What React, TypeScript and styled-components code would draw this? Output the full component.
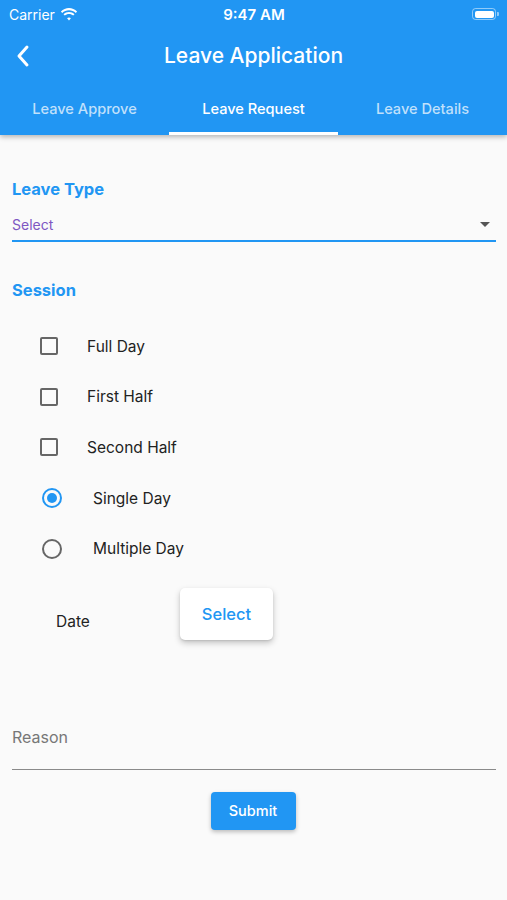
import React from "react";
import styled, { createGlobalStyle } from "styled-components";

const Global = createGlobalStyle`
  html, body { margin: 0; padding: 0; background: #fafafa; }
  body { font-family: Inter, Roboto, "Noto Sans", "Liberation Sans", sans-serif; }
  * { box-sizing: border-box; }
`;

const Page = styled.div`
  width: 507px;
  height: 900px;
  background: #fafafa;
  display: flex;
  flex-direction: column;
  overflow: hidden;
`;

const Header = styled.header`
  background: #2196f3;
  color: #fff;
  box-shadow: 0 2px 5px rgba(0, 0, 0, 0.28);
  position: relative;
  z-index: 1;
`;

const StatusBar = styled.div`
  height: 28px;
  display: grid;
  grid-template-columns: 1fr auto 1fr;
  align-items: center;
  padding: 0 8px 0 9px;
  font-size: 14px;
  font-weight: 600;
`;

const Carrier = styled.div`
  display: flex;
  align-items: center;
  gap: 5px;
  font-weight: 400;
  font-size: 14px;
`;

const Time = styled.div`
  font-size: 15px;
  font-weight: 600;
`;

const Battery = styled.div`
  justify-self: end;
  display: flex;
  align-items: center;
`;

const BatteryBody = styled.div`
  width: 24px;
  height: 12px;
  border-radius: 3.5px;
  border: 1px solid rgba(255, 255, 255, 0.5);
  padding: 1.5px;
  & > div {
    background: #fff;
    width: 100%;
    height: 100%;
    border-radius: 2px;
  }
`;

const BatteryTip = styled.div`
  width: 2px;
  height: 4px;
  margin-left: 1px;
  background: rgba(255, 255, 255, 0.5);
  border-radius: 0 1px 1px 0;
`;

const TitleRow = styled.div`
  height: 55px;
  display: flex;
  align-items: center;
  justify-content: center;
  position: relative;
`;

const Back = styled.div`
  position: absolute;
  left: 15px;
  top: 16px;
  display: flex;
`;

const Title = styled.h1`
  margin: 0;
  font-size: 21px;
  font-weight: 500;
`;

const Tabs = styled.nav`
  display: grid;
  grid-template-columns: repeat(3, 1fr);
  height: 52px;
`;

const Tab = styled.div<{ $active?: boolean }>`
  display: flex;
  align-items: center;
  justify-content: center;
  padding-top: 2px;
  font-size: 14.6px;
  font-weight: 500;
  color: ${(p) => (p.$active ? "#fff" : "rgba(255,255,255,0.72)")};
  border-bottom: 3px solid ${(p) => (p.$active ? "#fff" : "transparent")};
`;

const Body = styled.main`
  padding: 42px 11px 0 12px;
  display: flex;
  flex-direction: column;
`;

const SectionLabel = styled.div`
  color: #2196f3;
  font-size: 16.5px;
  font-weight: 700;
  line-height: 24px;
`;

const Dropdown = styled.div`
  margin-top: 11px;
  height: 30px;
  display: flex;
  align-items: center;
  justify-content: space-between;
  border-bottom: 2px solid #2196f3;
  padding-bottom: 4px;
  padding-right: 6px;
`;

const DropText = styled.span`
  color: #7e57c2;
  font-size: 14px;
`;

const Caret = styled.span`
  width: 0;
  height: 0;
  border-left: 5px solid transparent;
  border-right: 5px solid transparent;
  border-top: 5px solid #555;
`;

const SessionBlock = styled.div`
  margin-top: 36px;
`;

const Options = styled.div`
  margin-top: 19px;
  display: flex;
  flex-direction: column;
`;

const OptionRow = styled.div<{ $radio?: boolean }>`
  height: 50.6px;
  display: flex;
  align-items: center;
  padding-left: ${(p) => (p.$radio ? "30px" : "28px")};
  gap: ${(p) => (p.$radio ? "31px" : "29px")};
  font-size: 15.5px;
  color: #222;
`;

const CheckBox = styled.span`
  width: 18px;
  height: 18px;
  border: 2px solid #666;
  border-radius: 2px;
  display: block;
`;

const Radio = styled.span<{ $on?: boolean }>`
  width: 20px;
  height: 20px;
  border-radius: 50%;
  border: 2px solid ${(p) => (p.$on ? "#2196f3" : "#666")};
  display: flex;
  align-items: center;
  justify-content: center;
  &::after {
    content: "";
    width: 10px;
    height: 10px;
    border-radius: 50%;
    background: ${(p) => (p.$on ? "#2196f3" : "transparent")};
  }
`;

const DateRow = styled.div`
  margin-top: 14px;
  display: flex;
  align-items: center;
  height: 52px;
`;

const DateLabel = styled.span`
  margin-left: 44px;
  margin-top: 16px;
  width: 124px;
  font-size: 15.5px;
  color: #222;
`;

const SelectButton = styled.button`
  width: 93px;
  height: 52px;
  border: none;
  border-radius: 5px;
  background: #fff;
  color: #2196f3;
  font-family: inherit;
  font-size: 16.5px;
  font-weight: 500;
  box-shadow: 0 3px 6px rgba(0, 0, 0, 0.22), 0 1px 2px rgba(0, 0, 0, 0.1);
`;

const ReasonField = styled.div`
  margin-top: 80px;
  height: 50px;
  border-bottom: 1.5px solid #8a8a8a;
  display: flex;
  align-items: center;
  padding-bottom: 14px;
  color: #777;
  font-size: 16px;
`;

const SubmitWrap = styled.div`
  margin-top: 22px;
  display: flex;
  justify-content: center;
  padding-right: 2px;
`;

const SubmitButton = styled.button`
  width: 85px;
  height: 38px;
  border: none;
  border-radius: 4px;
  background: #2196f3;
  color: #fff;
  font-family: inherit;
  font-size: 14.5px;
  font-weight: 500;
  box-shadow: 0 2px 4px rgba(0, 0, 0, 0.25);
`;

const Wifi = () => (
  <svg width="18" height="13" viewBox="0 0 18 13" fill="#fff">
    <path d="M9 2.2c2.6 0 5 1 6.8 2.7l1.3-1.4C14.9 1.3 12 0 9 0S3.1 1.3.9 3.5l1.3 1.4C4 3.2 6.4 2.2 9 2.2z" />
    <path d="M9 5.9c1.6 0 3.1.6 4.2 1.7l1.3-1.4C13 4.8 11.1 4 9 4S5 4.8 3.5 6.2l1.3 1.4C5.9 6.5 7.4 5.9 9 5.9z" />
    <path d="M9 9.5c.7 0 1.4.3 1.9.8L9 12.4l-1.9-2.1c.5-.5 1.2-.8 1.9-.8z" />
  </svg>
);

const Chevron = () => (
  <svg width="16" height="24" viewBox="0 0 16 24" fill="none">
    <path d="M12 3 L4 12 L12 21" stroke="#fff" strokeWidth="3" strokeLinecap="round" strokeLinejoin="round" />
  </svg>
);

export default function App() {
  return (
    <Page>
      <Global />
      <Header>
        <StatusBar>
          <Carrier>
            Carrier <Wifi />
          </Carrier>
          <Time>9:47 AM</Time>
          <Battery>
            <BatteryBody>
              <div />
            </BatteryBody>
            <BatteryTip />
          </Battery>
        </StatusBar>
        <TitleRow>
          <Back>
            <Chevron />
          </Back>
          <Title>Leave Application</Title>
        </TitleRow>
        <Tabs>
          <Tab>Leave Approve</Tab>
          <Tab $active>Leave Request</Tab>
          <Tab>Leave Details</Tab>
        </Tabs>
      </Header>
      <Body>
        <SectionLabel>Leave Type</SectionLabel>
        <Dropdown>
          <DropText>Select</DropText>
          <Caret />
        </Dropdown>
        <SessionBlock>
          <SectionLabel>Session</SectionLabel>
        </SessionBlock>
        <Options>
          <OptionRow>
            <CheckBox />
            Full Day
          </OptionRow>
          <OptionRow>
            <CheckBox />
            First Half
          </OptionRow>
          <OptionRow>
            <CheckBox />
            Second Half
          </OptionRow>
          <OptionRow $radio>
            <Radio $on />
            Single Day
          </OptionRow>
          <OptionRow $radio>
            <Radio />
            Multiple Day
          </OptionRow>
        </Options>
        <DateRow>
          <DateLabel>Date</DateLabel>
          <SelectButton>Select</SelectButton>
        </DateRow>
        <ReasonField>Reason</ReasonField>
        <SubmitWrap>
          <SubmitButton>Submit</SubmitButton>
        </SubmitWrap>
      </Body>
    </Page>
  );
}
